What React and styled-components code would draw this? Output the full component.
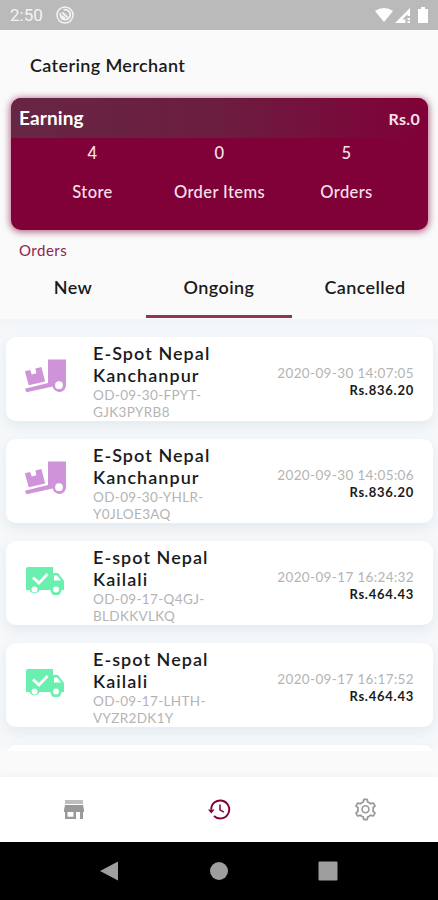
import React from "react";
import styled, { createGlobalStyle } from "styled-components";
import { AiOutlineSetting } from "react-icons/ai";

const colors = {
  maroon: "#800038",
  ink: "#1b1b1b",
  muted: "#b4b4b4",
  page: "#fafafa",
};

const orders = [
  { id: "OD-09-30-FPYT-GJK3PYRB8", store: "E-Spot Nepal Kanchanpur", date: "2020-09-30 14:07:05", total: "Rs.836.20", status: "loading" },
  { id: "OD-09-30-YHLR-Y0JLOE3AQ", store: "E-Spot Nepal Kanchanpur", date: "2020-09-30 14:05:06", total: "Rs.836.20", status: "loading" },
  { id: "OD-09-17-Q4GJ-BLDKKVLKQ", store: "E-spot Nepal Kailali", date: "2020-09-17 16:24:32", total: "Rs.464.43", status: "shipped" },
  { id: "OD-09-17-LHTH-VYZR2DK1Y", store: "E-spot Nepal Kailali", date: "2020-09-17 16:17:52", total: "Rs.464.43", status: "shipped" },
];

const stats = [
  { value: "4", label: "Store" },
  { value: "0", label: "Order Items" },
  { value: "5", label: "Orders" },
];

const tabs = ["New", "Ongoing", "Cancelled"];

const LoadingIcon = () => (
  <svg width="43" height="34" viewBox="0 0 43 34" fill="#ce93d8">
    <path d="M24 .5h18v25.500a6.700 6.700 0 0 1-13.300 1.400L2.500 33.200.9 29.700 24 24zM35 22.300a3.900 3.900 0 1 0 0 7.800 3.900 3.900 0 0 0 0-7.800z" fillRule="evenodd" />
    <path d="M.9 12.300l5.200-1.300 1.700 4.500 4.600-1.300-1-4.700 6-1.500 3.700 14.500L4.700 26.300z" />
  </svg>
);

const ShippedIcon = () => (
  <svg width="38" height="29" viewBox="0 0 38 29" fill="#69f0ae">
    <path d="M3 1h24v6h5l6 8v9h-2.500a5.500 5.500 0 0 1-11 0H13.500a5.500 5.500 0 0 1-10 0H0V3a2 2 0 0 1 2-2zM28 9.500v5h7l-3.700-5zM8.500 20.500a3 3 0 1 0 0 6 3 3 0 0 0 0-6zM30 20.500a3 3 0 1 0 0 6 3 3 0 0 0 0-6zM8 10.500l-2 2 7 6.500L22.500 9l-2-2-7.500 8z" fillRule="evenodd" />
  </svg>
);

const StoreIcon = () => (
  <svg width="20" height="19" viewBox="0 0 20 19" fill="#999">
    <path d="M1 0h18v4H1z" opacity=".65" />
    <path d="M1 5h18l1 5v2h-1v7h-3v-7h-4v7H1v-7H0v-2zM3.500 12v4.800h6V12z" fillRule="evenodd" />
  </svg>
);

const HistoryIcon = () => (
  <svg width="23" height="21" viewBox="0 0 23 21" fill="none" stroke={colors.maroon}>
    <path d="M3.200 10.500a9 9 0 1 1 2.800 6.500" strokeWidth="1.900" />
    <path d="M12 5.500v5.300l3.800 2.300" strokeWidth="1.500" />
    <path d="M0 10.500h6.600l-3.300 4z" fill={colors.maroon} stroke="none" />
  </svg>
);

const App = () => (
  <>
    <GlobalStyle />
    <Screen>
      <StatusBar>
        <Clock>2:50</Clock>
        <svg width="18" height="18" viewBox="0 0 18 18" fill="none" stroke="#f4f4f4">
          <circle cx="9" cy="9" r="8" strokeWidth="1.500" />
          <path d="M4.600 7a5 5 0 1 0 3-3M6.500 6.500l5 5M6 9.500A3.500 3.500 0 0 0 9 12" strokeWidth="1.800" />
        </svg>
        <StatusIcons>
          <svg width="54" height="18" viewBox="0 0 54 18" fill="#fff">
            <path d="M0 5Q9-1 18 5L9 16z" />
            <path d="M20 17L35 2v8h-2.500V8l-5 5.500h3V17zM32.500 12H35v2h-2.500zM32.500 15H35v2h-2.500z" />
            <path d="M43 3h3V1h4v2h3v14H43z" />
          </svg>
        </StatusIcons>
      </StatusBar>

      <Title>Catering Merchant</Title>

      <EarningCard>
        <EarningHeader>
          <EarningLabel>Earning</EarningLabel>
          <EarningTotal>Rs.0</EarningTotal>
        </EarningHeader>
        <Stats>
          {stats.map(({ value, label }) => (
            <Stat key={label}>
              <span>{value}</span>
              <span>{label}</span>
            </Stat>
          ))}
        </Stats>
      </EarningCard>

      <SectionLabel>Orders</SectionLabel>

      <Tabs>
        {tabs.map((tab) => (
          <Tab key={tab} $active={tab === "Ongoing"}>{tab}</Tab>
        ))}
      </Tabs>

      <OrderList>
        {orders.map((order) => (
          <OrderCard key={order.id}>
            <IconSlot $shipped={order.status === "shipped"}>
              {order.status === "loading" ? <LoadingIcon /> : <ShippedIcon />}
            </IconSlot>
            <OrderInfo>
              <StoreName>{order.store}</StoreName>
              <OrderId>{order.id}</OrderId>
            </OrderInfo>
            <OrderMeta>
              <OrderDate>{order.date}</OrderDate>
              <OrderTotal>{order.total}</OrderTotal>
            </OrderMeta>
          </OrderCard>
        ))}
        <OrderCard />
      </OrderList>

      <BottomNav>
        <NavItem><StoreIcon /></NavItem>
        <NavItem><HistoryIcon /></NavItem>
        <NavItem><AiOutlineSetting size={25} /></NavItem>
      </BottomNav>

      <SystemNav>
        <svg width="20" height="20" viewBox="0 0 20 20"><path d="M0 10L18 .5v19z" /></svg>
        <svg width="20" height="20" viewBox="0 0 20 20"><circle cx="10" cy="10" r="9" /></svg>
        <svg width="20" height="20" viewBox="0 0 20 20"><rect x=".5" y=".5" width="19" height="19" rx="1" /></svg>
      </SystemNav>
    </Screen>
  </>
);

const GlobalStyle = createGlobalStyle`
  * {
    box-sizing: border-box;
  }

  body {
    margin: 0;
    background: ${colors.page};
    font-family: Lato, "Open Sans", sans-serif;
  }

  svg {
    display: block;
  }
`;

const Screen = styled.div`
  display: flex;
  flex-direction: column;
  width: 438px;
  height: 900px;
  overflow: hidden;
  background: ${colors.page};
  color: ${colors.ink};
`;

const StatusBar = styled.header`
  display: flex;
  align-items: center;
  flex: none;
  gap: 13px;
  height: 30px;
  padding: 0 9px 0 10px;
  background: #bababa;
`;

const Clock = styled.span`
  color: #f4f4f4;
  font: 400 17px/32px Roboto, sans-serif;
`;

const StatusIcons = styled.div`
  margin-left: auto;
`;

const Title = styled.h1`
  flex: none;
  height: 68px;
  margin: 0;
  padding-left: 30px;
  font-size: 18px;
  font-weight: 600;
  line-height: 70px;
  letter-spacing: 0.37px;
`;

const EarningCard = styled.section`
  flex: none;
  height: 132px;
  margin: 0 10px 0 11px;
  border-radius: 10px;
  overflow: hidden;
  background: ${colors.maroon};
  box-shadow: 0 1px 7px 1px rgba(128, 0, 56, 0.6);
  color: #f6e3ea;
`;

const EarningHeader = styled.div`
  display: flex;
  align-items: center;
  justify-content: space-between;
  height: 40px;
  padding: 0 8px;
  background: linear-gradient(90deg, #672644, #6c1d40 50%, ${colors.maroon});
`;

const EarningLabel = styled.span`
  color: #fff;
  font-size: 19px;
  font-weight: 700;
  line-height: 40px;
  letter-spacing: 0.1px;
`;

const EarningTotal = styled.span`
  font-size: 16px;
  font-weight: 700;
  letter-spacing: 0.3px;
`;

const Stats = styled.div`
  display: grid;
  grid-template-columns: repeat(3, 1fr);
  padding: 5px 18px 0;
`;

const Stat = styled.div`
  display: flex;
  flex-direction: column;
  align-items: center;
  gap: 19px;
  font-size: 16.5px;
  font-weight: 500;
  line-height: 20px;
  letter-spacing: 0.4px;
`;

const SectionLabel = styled.h2`
  flex: none;
  height: 30px;
  margin: 0;
  padding: 9px 0 0 19px;
  color: #8c2450;
  font-size: 15px;
  font-weight: 400;
  line-height: 22px;
  letter-spacing: 0.5px;
`;

const Tabs = styled.nav`
  display: grid;
  grid-template-columns: repeat(3, 146px);
  flex: none;
  height: 59px;
`;

const Tab = styled.div`
  border-bottom: 3px solid ${({ $active }) => ($active ? "#8f3457" : "transparent")};
  height: 58px;
  font-size: 18px;
  font-weight: 600;
  line-height: 55px;
  letter-spacing: 0.4px;
  text-align: center;
`;

const OrderList = styled.main`
  display: flex;
  flex-direction: column;
  flex: none;
  gap: 18px;
  height: 432px;
  padding: 18px 5px 0 6px;
  overflow: hidden;
  background: linear-gradient(#f0f4f6, #f6f8fa 12px, #f6f8fa 426px, ${colors.page});
`;

const OrderCard = styled.article`
  display: flex;
  flex: none;
  height: 84px;
  padding: 6px 19px 0 18px;
  border-radius: 10px;
  background: #fff;
  box-shadow: 0 5px 12px rgba(176, 200, 212, 0.28);
`;

const IconSlot = styled.div`
  width: 69px;
  padding: ${({ $shipped }) => ($shipped ? "19px 0 0 2px" : "16px 0 0")};
`;

const OrderInfo = styled.div`
  width: 135px;
`;

const StoreName = styled.h3`
  margin: -1px 0 1px;
  font-size: 18px;
  font-weight: 600;
  line-height: 22px;
  letter-spacing: 1.050px;
`;

const OrderId = styled.div`
  color: ${colors.muted};
  font-size: 13.500px;
  line-height: 17px;
  letter-spacing: 0.35px;
`;

const OrderMeta = styled.div`
  margin-left: auto;
  padding-top: 22px;
  text-align: right;
  line-height: 17px;
`;

const OrderDate = styled.div`
  color: ${colors.muted};
  font-size: 13.500px;
  letter-spacing: 0.36px;
`;

const OrderTotal = styled.div`
  font-size: 13px;
  font-weight: 700;
  letter-spacing: 0.75px;
`;

const BottomNav = styled.nav`
  display: grid;
  grid-template-columns: repeat(3, 1fr);
  flex: none;
  height: 65px;
  margin-top: auto;
  padding-left: 1px;
  background: #fff;
  box-shadow: 0 0 8px rgba(0, 0, 0, 0.05);
`;

const NavItem = styled.div`
  display: flex;
  align-items: center;
  justify-content: center;
  color: #999;
`;

const SystemNav = styled.footer`
  display: flex;
  justify-content: center;
  align-items: center;
  flex: none;
  gap: 89px;
  height: 58px;
  background: #000;
  fill: #9e9e9e;
`;

export default App;
